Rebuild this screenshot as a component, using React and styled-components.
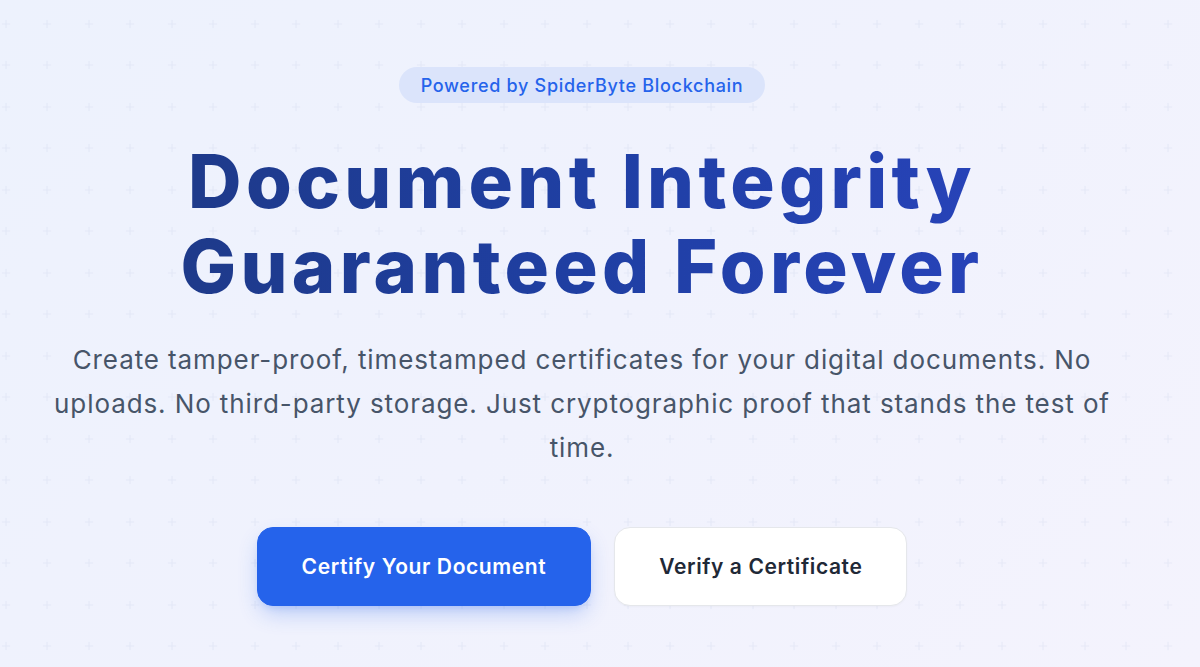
import React from "react";
import styled, { createGlobalStyle } from "styled-components";

const GlobalStyle = createGlobalStyle`
  * { box-sizing: border-box; }
  html, body { margin: 0; padding: 0; }
  body {
    font-family: Inter, "Noto Sans", "Liberation Sans", sans-serif;
    font-optical-sizing: none;
    font-variation-settings: "opsz" 14;
    background: #eff2fd;
  }
`;

const plus = encodeURIComponent(
  `<svg xmlns="http://www.w3.org/2000/svg" width="40" height="40" viewBox="0 0 40 40"><path d="M20 16v8M16 20h8" stroke="#c7d0ea" stroke-width="1" opacity="0.3"/></svg>`
);

const Page = styled.main`
  min-height: 667px;
  width: 100%;
  background-color: #eff2fd;
  background-image: url("data:image/svg+xml,${plus}"),
    linear-gradient(135deg, #edf2fd 0%, #f0f2fd 50%, #f4f3fd 100%);
  background-size: 41.5px 41.5px, 100% 100%;
  background-position: -15px 3px, 0 0;
  display: flex;
  justify-content: center;
  padding: 67px 36px 0 0;
`;

const Hero = styled.section`
  display: flex;
  flex-direction: column;
  align-items: center;
  text-align: center;
  width: 100%;
`;

const Badge = styled.span`
  display: inline-flex;
  align-items: center;
  height: 36px;
  padding: 0 22px;
  border-radius: 999px;
  background: #dbe4fb;
  color: #2563eb;
  font-size: 18px;
  font-weight: 500;
  letter-spacing: 0.7px;
`;

const Title = styled.h1`
  margin: 36px 0 0;
  font-size: 74px;
  line-height: 85px;
  font-weight: 800;
  letter-spacing: 4.3px;
  background: linear-gradient(90deg, #1e3a8a 0%, #1f3fa3 50%, #2743b8 100%);
  -webkit-background-clip: text;
  background-clip: text;
  color: transparent;
`;

const Lead = styled.p`
  margin: 29px 0 0;
  max-width: 1080px;
  font-size: 26px;
  line-height: 44px;
  letter-spacing: 0.9px;
  color: #475569;
`;

const Actions = styled.div`
  display: flex;
  gap: 23px;
  margin-top: 57px;
`;

const Button = styled.button`
  font-family: inherit;
  font-size: 21px;
  font-weight: 600;
  line-height: 29px;
  letter-spacing: 0.6px;
  padding: 24px 44px;
  border-radius: 16px;
  cursor: pointer;
  border: 1px solid ${(p) => (p.$primary ? "#2563eb" : "#e5e7eb")};
  background: ${(p) => (p.$primary ? "#2563eb" : "#ffffff")};
  color: ${(p) => (p.$primary ? "#ffffff" : "#1f2937")};
  box-shadow: ${(p) =>
    p.$primary
      ? "0 10px 22px -4px rgba(37, 99, 235, 0.3), 0 4px 8px -4px rgba(37, 99, 235, 0.2)"
      : "0 1px 2px rgba(15, 23, 42, 0.03)"};
`;

export default function App() {
  return (
    <>
      <GlobalStyle />
      <Page>
        <Hero>
          <Badge>Powered by SpiderByte Blockchain</Badge>
          <Title>
            Document Integrity
            <br />
            Guaranteed Forever
          </Title>
          <Lead>
            Create tamper-proof, timestamped certificates for your digital
            documents. No uploads. No third-party storage. Just cryptographic
            proof that stands the test of time.
          </Lead>
          <Actions>
            <Button $primary>Certify Your Document</Button>
            <Button>Verify a Certificate</Button>
          </Actions>
        </Hero>
      </Page>
    </>
  );
}
